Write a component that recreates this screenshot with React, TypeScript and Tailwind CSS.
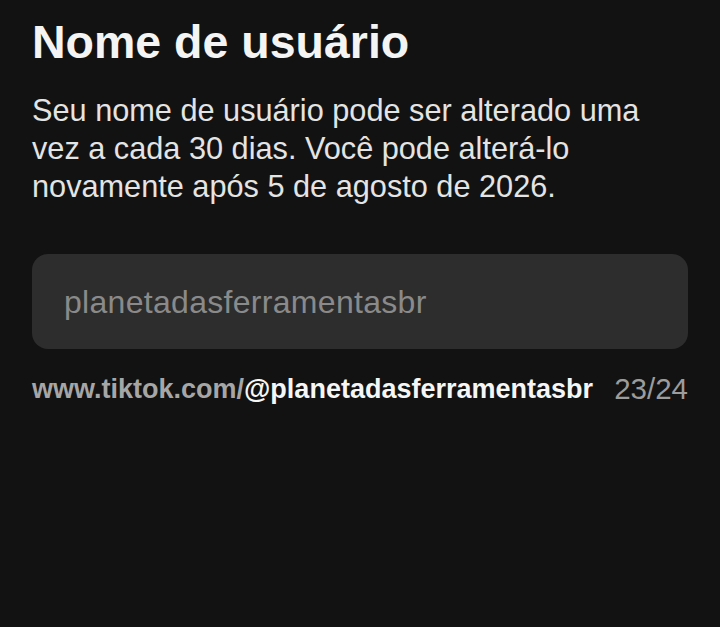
export default function App() {
  return (
    <div className="h-[627px] w-[720px] overflow-hidden bg-[#121212] px-8 pt-[14px] font-['Liberation_Sans',Arial,sans-serif]">
      {/* Header */}
      <h1 className="text-[46.5px] leading-[56px] font-bold text-[#f4f4f4]">Nome de usuário</h1>
      <p className="mt-[22px] text-[30.7px] leading-[38px] text-[#e4e4e4]">
        Seu nome de usuário pode ser alterado uma
        <br />
        vez a cada 30 dias. Você pode alterá-lo
        <br />
        novamente após 5 de agosto de 2026.
      </p>

      {/* Username field */}
      <div className="mt-[48px] flex h-[95px] items-center rounded-[16px] bg-[#2d2d2d] px-8">
        <input
          type="text"
          placeholder="planetadasferramentasbr"
          className="w-full bg-transparent text-[32px] tracking-[0.3px] text-[#f0f0f0] outline-none placeholder:text-[#8a8a8a]"
        />
      </div>

      <div className="mt-[24px] flex items-center justify-between text-[27px] leading-[32px]">
        <p className="font-bold text-[#a6a6a6]">
          www.tiktok.com/<span className="text-[#f6f6f6]">@planetadasferramentasbr</span>
        </p>
        <span className="text-[29.5px] text-[#9c9c9c]">23/24</span>
      </div>
    </div>
  )
}
